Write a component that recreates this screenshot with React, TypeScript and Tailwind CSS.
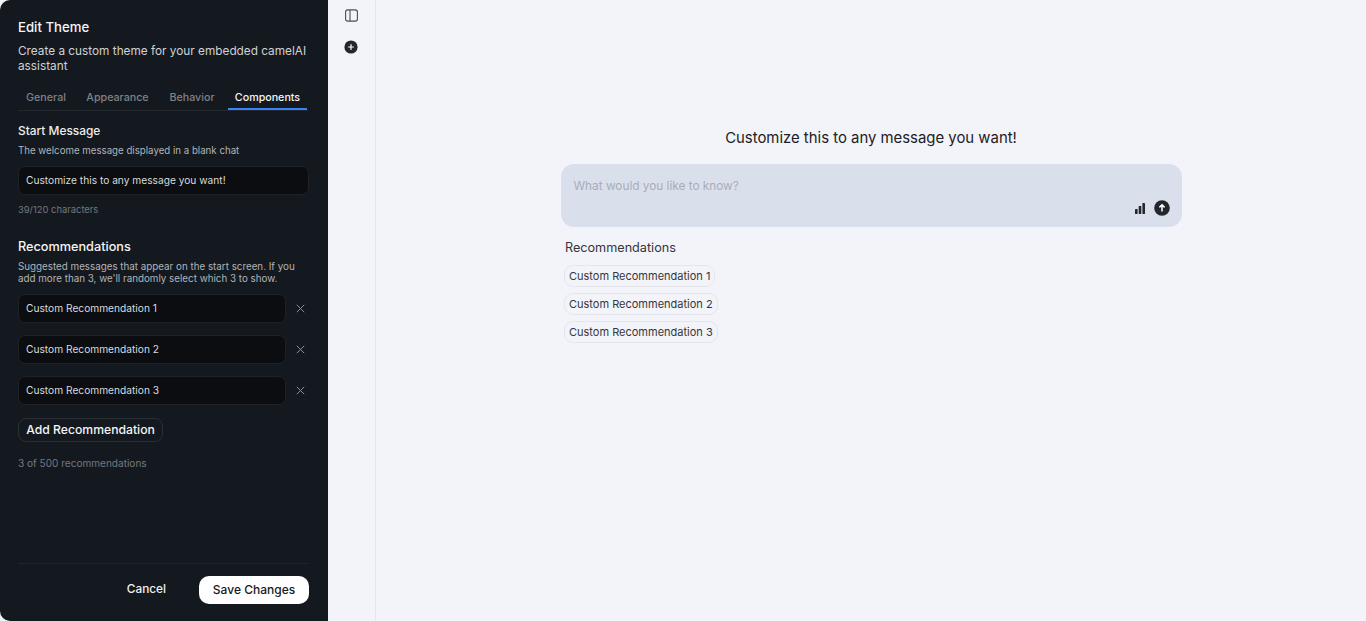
import React from "react";

const recs = ["Custom Recommendation 1", "Custom Recommendation 2", "Custom Recommendation 3"];
const tabs = [
  { label: "General", w: "w-[54px]" },
  { label: "Appearance", w: "w-[77px]" },
  { label: "Behavior", w: "w-[60px]" },
];

function CloseIcon() {
  return (
    <svg width="9" height="9" viewBox="0 0 9 9" fill="none" stroke="#8a8e95" strokeWidth="1">
      <path d="M0.8 0.8L8.2 8.2M8.2 0.8L0.8 8.2" />
    </svg>
  );
}

export default function App() {
  return (
    <div className="flex h-[621px] w-[1366px] overflow-hidden bg-[#f2f4f9] font-['Inter',sans-serif] antialiased">
      <aside className="flex h-full w-[328px] shrink-0 flex-col rounded-l-[10px] bg-[#141920] pl-[18px] pr-[19px] text-white">
        <h1 className="mt-[18px] text-[13.2px] leading-[18px] font-medium text-[#f4f5f6]">Edit Theme</h1>
        <p className="mt-[8px] w-[292px] text-[11.8px] leading-[15px] text-[#d0d2d5]">
          Create a custom theme for your embedded camelAI assistant
        </p>
        <div className="mt-[9px] flex h-[28px] items-stretch gap-[6px] border-b border-[#23272e] pl-[1px] text-[10.7px] font-medium">
          {tabs.map((t) => (
            <span key={t.label} className={`flex ${t.w} items-center justify-center pt-[3px] text-[#808286]`}>
              {t.label}
            </span>
          ))}
          <span className="flex w-[79px] items-center justify-center border-b-2 border-[#3b82f6] pt-[5px] text-[#f4f5f6]">
            Components
          </span>
        </div>

        <h2 className="mt-[11px] text-[11.9px] leading-[18px] font-medium text-[#eceded]">Start Message</h2>
        <p className="mt-[4px] text-[9.7px] leading-[14px] text-[#b2b4b8]">The welcome message displayed in a blank chat</p>
        <div className="mt-[8px] flex h-[29px] w-[291px] shrink-0 items-center rounded-[7px] border border-[#1f2329] bg-[#0b0d10] px-[7px] text-[10.2px] text-[#dadbdc]">
          Customize this to any message you want!
        </div>
        <p className="mt-[8px] text-[9.4px] leading-[14px] text-[#74777d]">39/120 characters</p>

        <h2 className="mt-[21px] text-[12.7px] leading-[18px] font-medium text-[#f4f5f6]">Recommendations</h2>
        <p className="mt-[5px] text-[9.8px] leading-[12px] text-[#b2b4b8]">
          Suggested messages that appear on the start screen. If you add more than 3, we'll randomly select which 3 to show.
        </p>
        <div className="mt-[9px] flex flex-col gap-[12px]">
          {recs.map((r) => (
            <div key={r} className="flex items-center">
              <div className="flex h-[29px] w-[268px] items-center rounded-[7px] border border-[#1f2329] bg-[#0b0d10] px-[7px] text-[10.2px] text-[#dadbdc]">
                {r}
              </div>
              <span className="ml-[10px] flex"><CloseIcon /></span>
            </div>
          ))}
        </div>
        <button className="mt-[13px] flex h-[24px] w-[145px] shrink-0 items-center justify-center rounded-[8px] border border-[#2a2e35] text-[12.2px] font-medium text-[#f4f5f6]">
          Add Recommendation
        </button>
        <p className="mt-[14px] text-[10.05px] leading-[14px] text-[#74777d]">3 of 500 recommendations</p>

        <div className="mt-auto flex h-[58px] shrink-0 items-center justify-end border-t border-[#20242a] pb-[5px]">
          <span className="mr-[33px] text-[11.8px] font-medium text-[#f0f1f2]">Cancel</span>
          <button className="flex h-[28px] w-[110px] items-center justify-center rounded-[10px] bg-white text-[12px] font-medium text-[#16191e]">
            Save Changes
          </button>
        </div>
      </aside>

      <nav className="flex w-[48px] shrink-0 flex-col items-center border-r border-[#e3e6ec] pt-[9px]">
        <svg width="13" height="13" viewBox="0 0 13 13" fill="none" stroke="#4b4e54" strokeWidth="1.1">
          <rect x="0.6" y="0.9" width="11.8" height="11.2" rx="2.2" />
          <path d="M5 0.9V12.1" />
        </svg>
        <svg className="mr-[1px] mt-[18px]" width="14" height="14" viewBox="0 0 14 14">
          <circle cx="7" cy="7" r="6.6" fill="#24262b" />
          <path d="M7 4.6V9.4M4.6 7H9.4" stroke="#fff" strokeWidth="1.2" strokeLinecap="round" />
        </svg>
      </nav>

      <main className="flex flex-1 flex-col items-center pt-[126px]">
        <h2 className="pt-[1px] text-[14.9px] leading-[23px] text-[#1d2025]">Customize this to any message you want!</h2>
        <div className="mt-[14px] flex h-[63px] w-[621px] flex-col rounded-[13px] bg-[#dae0eb] pl-[13px] pr-[12px] pt-[14px]">
          <span className="text-[11.8px] leading-[17px] text-[#a8adb8]">What would you like to know?</span>
          <div className="mt-[5px] flex items-center justify-end gap-[8px]">
            <svg width="12" height="12" viewBox="0 0 12 12" fill="#24262b">
              <rect x="1" y="7" width="2.6" height="5" rx="0.4" />
              <rect x="4.7" y="4" width="2.6" height="8" rx="0.4" />
              <rect x="8.4" y="1" width="2.6" height="11" rx="0.4" />
            </svg>
            <svg width="16" height="16" viewBox="0 0 16 16">
              <circle cx="8" cy="8" r="7.8" fill="#24262b" />
              <path d="M8 11.6V5M5.4 7.4L8 4.8L10.6 7.4" stroke="#fff" strokeWidth="1.5" fill="none" />
            </svg>
          </div>
        </div>
        <div className="mt-[11px] w-[614px]">
          <h3 className="pl-[1px] text-[12.65px] leading-[20px] text-[#33363b]">Recommendations</h3>
          <div className="mt-[7px] flex flex-col items-start gap-[6px]">
            {recs.map((r) => (
              <span key={r} className="flex h-[22px] items-center rounded-[9px] border border-[#e4e6ec] px-[4px] text-[11px] text-[#33363b]">
                {r}
              </span>
            ))}
          </div>
        </div>
      </main>
    </div>
  );
}
